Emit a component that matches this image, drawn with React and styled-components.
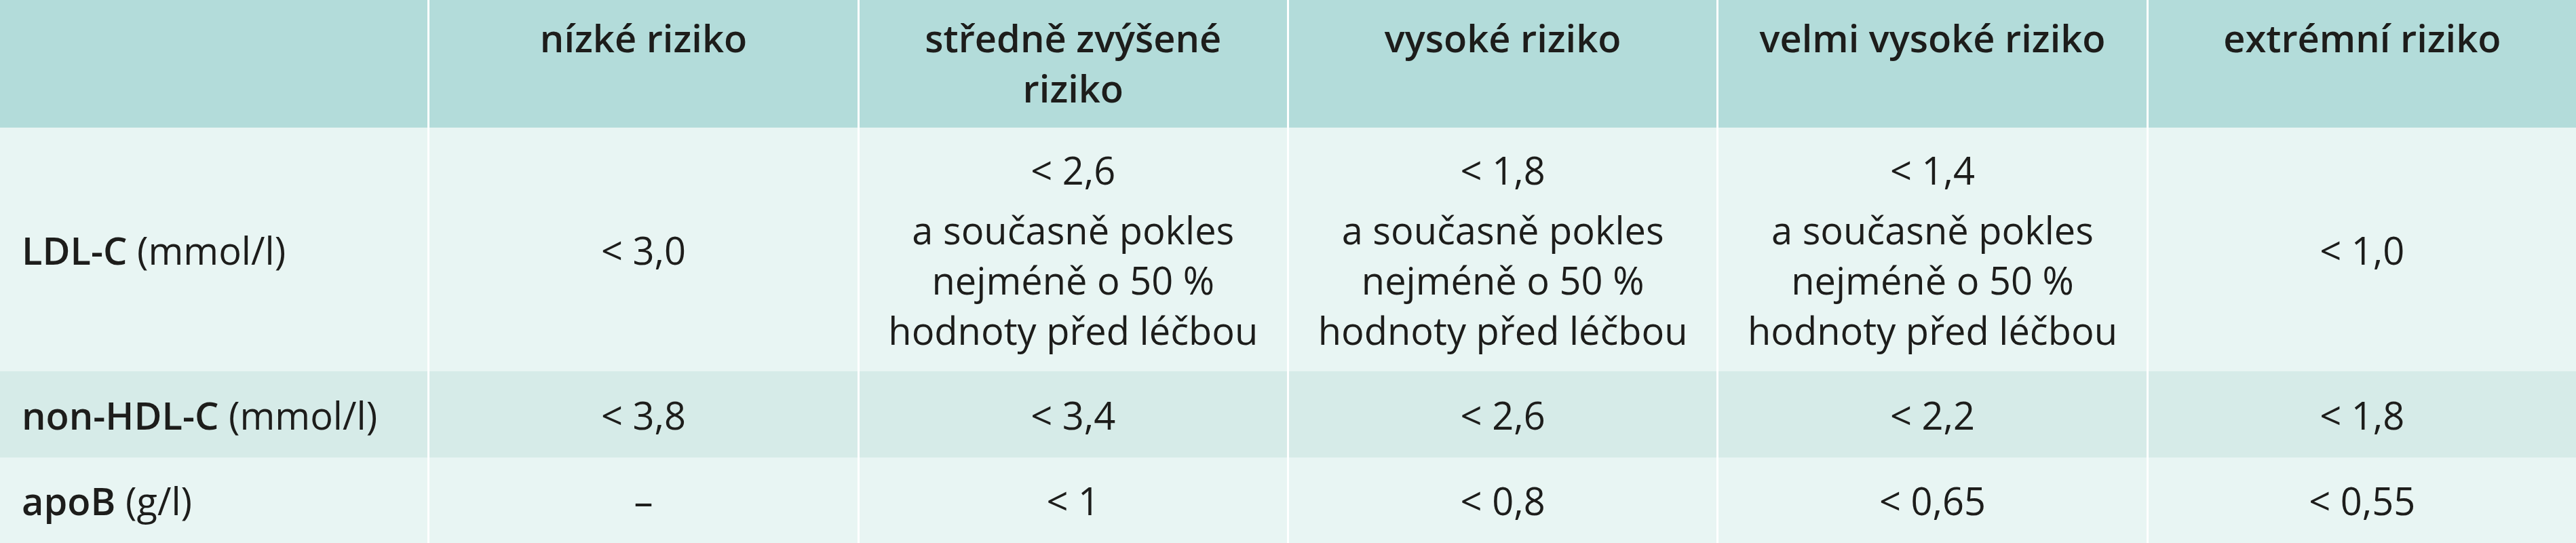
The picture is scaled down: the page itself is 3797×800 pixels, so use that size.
import React from 'react';
import styled, { createGlobalStyle } from 'styled-components';

const GlobalStyle = createGlobalStyle`
  html, body {
    margin: 0;
    padding: 0;
    background: #ffffff;
  }
  body {
    font-family: "Open Sans", "Noto Sans", sans-serif;
    color: #1d1d1b;
  }
`;

const tones = {
  head: '#b3dcda',
  light: '#e8f5f3',
  mid: '#d6ebe8'
};

const Table = styled.div`
  display: grid;
  grid-template-columns: repeat(6, 1fr);
  grid-template-rows: 188px 359px 127px 126px;
  column-gap: 3px;
  width: 3797px;
  background: #ffffff;
`;

const Cell = styled.div`
  display: flex;
  flex-direction: column;
  justify-content: ${p => (p.$head ? 'flex-start' : 'center')};
  align-items: ${p => (p.$label ? 'flex-start' : 'center')};
  padding: ${p => (p.$head ? '18px 20px 0' : p.$label ? '0 20px 0 32px' : '0 20px')};
  background: ${p => tones[p.$tone]};
  font-size: 56px;
  line-height: 74px;
  font-weight: ${p => (p.$head ? 600 : 400)};
  text-align: ${p => (p.$label ? 'left' : 'center')};
  white-space: nowrap;
`;

const Strong = styled.span`
  font-weight: 600;
`;

// the limit value sits a little apart from the note below it
const Line = styled.span`
  display: block;
  margin-bottom: ${p => (p.$apart ? '14px' : '0')};
`;

const headers = [
  ['nízké riziko'],
  ['středně zvýšené', 'riziko'],
  ['vysoké riziko'],
  ['velmi vysoké riziko'],
  ['extrémní riziko']
];

const drop = ['a současně pokles', 'nejméně o 50 %', 'hodnoty před léčbou'];

const rows = [
  {
    tone: 'light',
    name: 'LDL-C',
    unit: '(mmol/l)',
    values: [['< 3,0'], ['< 2,6', ...drop], ['< 1,8', ...drop], ['< 1,4', ...drop], ['< 1,0']]
  },
  {
    tone: 'mid',
    name: 'non-HDL-C',
    unit: '(mmol/l)',
    values: [['< 3,8'], ['< 3,4'], ['< 2,6'], ['< 2,2'], ['< 1,8']]
  },
  {
    tone: 'light',
    name: 'apoB',
    unit: '(g/l)',
    values: [['–'], ['< 1'], ['< 0,8'], ['< 0,65'], ['< 0,55']]
  }
];

export default function App() {
  return (
    <>
      <GlobalStyle />
      <Table>
        <Cell $head $label $tone="head" />
        {headers.map((lines, i) => (
          <Cell key={'h' + i} $head $tone="head">
            {lines.map(l => <Line key={l}>{l}</Line>)}
          </Cell>
        ))}
        {rows.map(row => (
          <React.Fragment key={row.name}>
            <Cell $label $tone={row.tone}>
              <span><Strong>{row.name}</Strong> {row.unit}</span>
            </Cell>
            {row.values.map((lines, i) => (
              <Cell key={row.name + i} $tone={row.tone}>
                {lines.map((l, j) => (
                  <Line key={l} $apart={j === 0 && lines.length > 1}>{l}</Line>
                ))}
              </Cell>
            ))}
          </React.Fragment>
        ))}
      </Table>
    </>
  );
}
